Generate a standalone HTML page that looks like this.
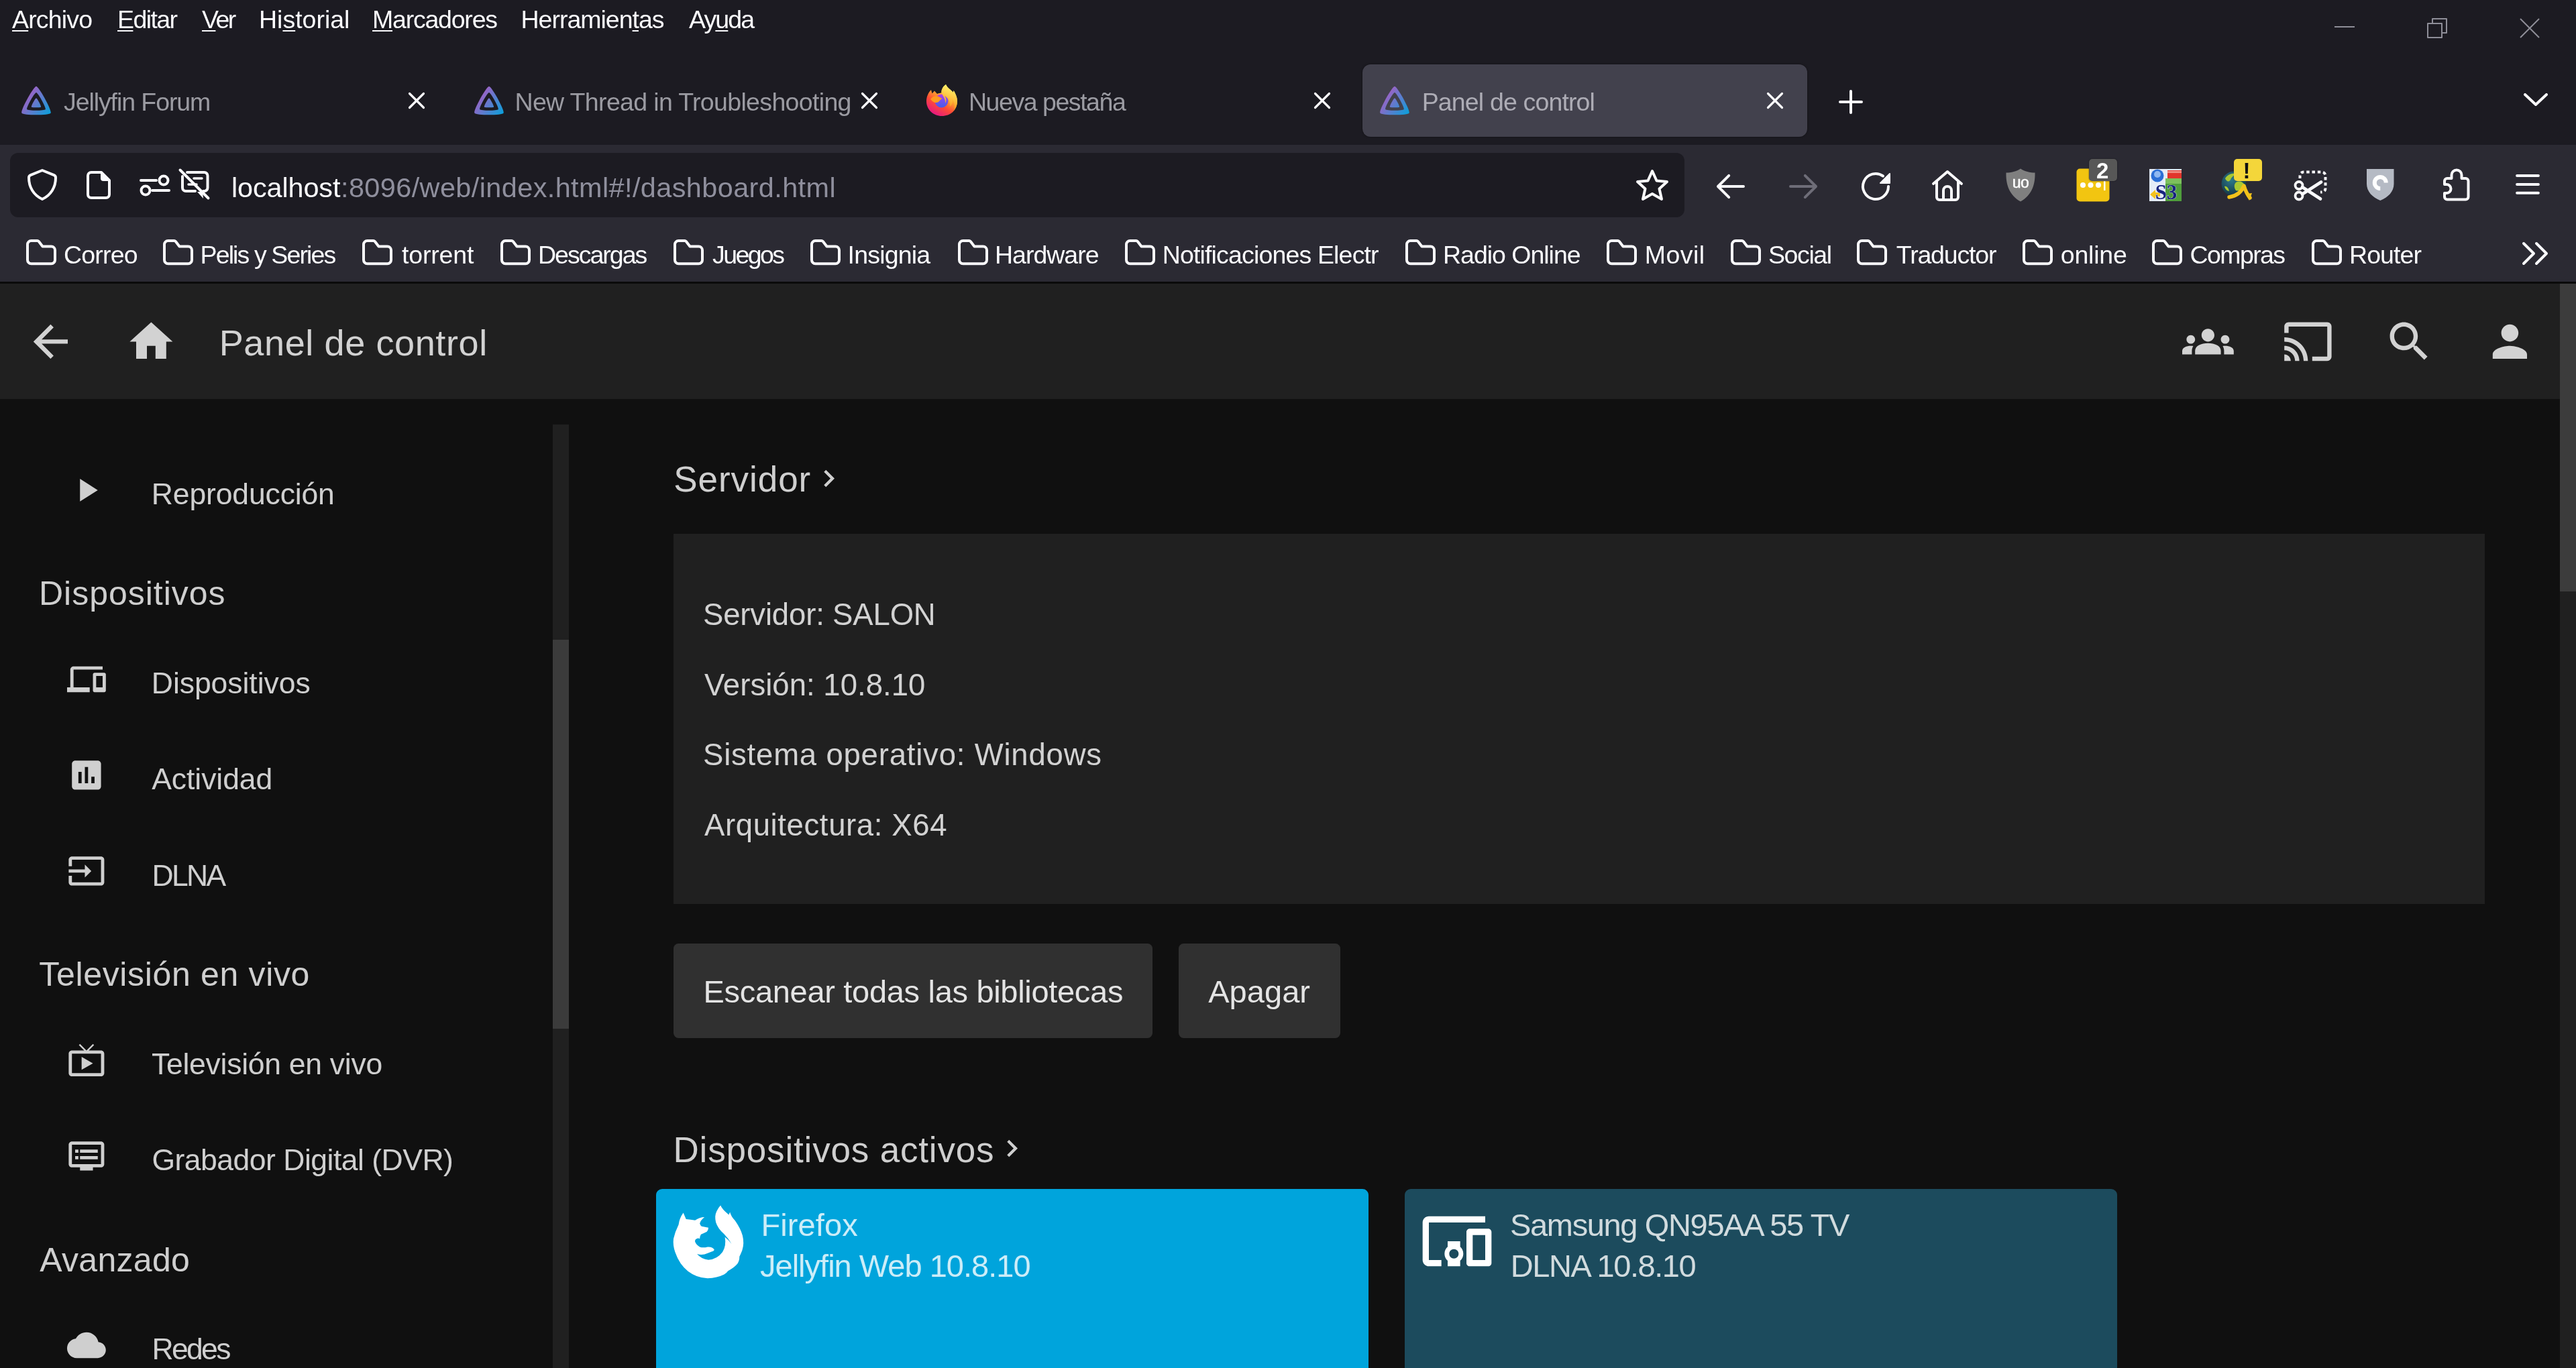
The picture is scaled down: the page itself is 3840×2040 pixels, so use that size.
<!DOCTYPE html>
<html lang="es"><head><meta charset="utf-8"><title>Panel de control</title>
<style>
*{box-sizing:border-box}
html,body{margin:0;padding:0}
body{width:3840px;height:2040px;overflow:hidden;background:#101010;font-family:"Liberation Sans",sans-serif;position:relative}
div,span,svg,h1,h2,h3,a,button,nav,header,main,aside,section,ul,li,p{position:absolute;margin:0;padding:0}
.g{left:0;top:0;width:0;height:0;overflow:visible;will-change:transform}
.t{white-space:pre;font-weight:400;display:block}
.ic{display:block;overflow:visible}
u{text-decoration:underline;text-decoration-thickness:2px;text-underline-offset:3px}
#frame{left:0;top:0;width:3840px;height:216px;background:#1c1b22}
#toolbar{left:0;top:216px;width:3840px;height:204px;background:#2b2a33}
#sep{left:0;top:420px;width:3840px;height:3px;background:#0a0a0a}
#seltab{left:2031px;top:96px;width:663px;height:108px;border-radius:12px;background:#42414d;box-shadow:0 0 3px rgba(0,0,0,.5)}
#urlbar{left:15px;top:228px;width:2496px;height:96px;border-radius:12px;background:#1c1b22}
#app{left:0;top:423px;width:3840px;height:1617px;background:#101010;overflow:hidden}
#hdr{left:0;top:0;width:3816px;height:172px;background:#202020}
#pgscroll{left:3816px;top:0;width:24px;height:1617px;background:#202020}
#pgthumb{left:0;top:0;width:24px;height:459px;background:#3c3c3c}
#drawer{left:0;top:172px;width:823px;height:1445px;background:#101010}
#dscroll{left:824px;top:210px;width:24px;height:1407px;background:#202020}
#dthumb{left:0;top:321px;width:24px;height:580px;background:#3b3b3b}
#panel{left:1003.75px;top:372.75px;width:2699.75px;height:552px;background:#202020}
.btn{background:#303030;border-radius:7.5px;height:140.5px;top:984px}
.card{top:1349.7px;width:1062.3px;height:300px;border-radius:9px 9px 0 0}
</style></head>
<body>
<div id="frame"></div>
<div id="toolbar"></div>
<div id="sep"></div>
<div id="seltab"></div>
<div id="urlbar"></div>
<nav id="menubar" class="g" >
<span class="t " style="left:18.0px;top:11.3px;font-size:37.5px;line-height:37.5px;letter-spacing:-0.83px;color:#fbfbfe;"><u>A</u>rchivo</span>
<span class="t " style="left:175.0px;top:11.3px;font-size:37.5px;line-height:37.5px;letter-spacing:-1.60px;color:#fbfbfe;"><u>E</u>ditar</span>
<span class="t " style="left:301.0px;top:11.3px;font-size:37.5px;line-height:37.5px;letter-spacing:-2.50px;color:#fbfbfe;"><u>V</u>er</span>
<span class="t " style="left:386.0px;top:11.3px;font-size:37.5px;line-height:37.5px;letter-spacing:0.00px;color:#fbfbfe;">Hi<u>s</u>torial</span>
<span class="t " style="left:555.0px;top:11.3px;font-size:37.5px;line-height:37.5px;letter-spacing:-1.22px;color:#fbfbfe;"><u>M</u>arcadores</span>
<span class="t " style="left:776.5px;top:11.3px;font-size:37.5px;line-height:37.5px;letter-spacing:-1.00px;color:#fbfbfe;">Herramien<u>t</u>as</span>
<span class="t " style="left:1027.0px;top:11.3px;font-size:37.5px;line-height:37.5px;letter-spacing:-1.88px;color:#fbfbfe;">Ay<u>u</u>da</span>
</nav>
<div id="titlebar" class="g" >
<svg class="ic" style="left:3480.0px;top:39.0px;width:30px;height:2px" viewBox="0 0 30 2" ><rect width="30" height="2" fill="#8e8e98"/></svg>
<svg class="ic" style="left:3618.0px;top:27.0px;width:30px;height:30px" viewBox="0 0 30 30" ><path d="M1 8H22V29H1Z M8 8V1H29V22H22" stroke="#8e8e98" stroke-width="2" fill="none" stroke-linejoin="round"/></svg>
<svg class="ic" style="left:3756.0px;top:27.0px;width:30px;height:30px" viewBox="0 0 30 30" ><path d="M1 1L29 29M29 1L1 29" stroke="#8e8e98" stroke-width="2" fill="none"/></svg>
</div>
<div id="tabstrip" class="g" >
<svg class="ic" style="left:32.0px;top:128.0px;width:44px;height:44px" viewBox="4.8 2.2 38.4 37.6" ><defs><linearGradient id="jg0" x1="8" y1="14" x2="44" y2="40" gradientUnits="userSpaceOnUse"><stop offset="0" stop-color="#aa5cc3"/><stop offset="1" stop-color="#00a4dc"/></linearGradient></defs><path fill="url(#jg0)" fill-rule="evenodd" d="M24 2.5c-3.4 0-20.6 31.2-18.9 34.6 1.7 3.4 36.1 3.4 37.8 0C44.600 33.700 27.400 2.500 24 2.500zM36 32.300c-1.050 2.100-22.950 2.100-24 0C10.900 30.200 21.900 10.600 24 10.600s13.100 19.600 12 21.700z"/><path fill="url(#jg0)" d="M24 17.800c-1.100 0-6.800 10.300-6.200 11.400.600 1.100 11.800 1.100 12.400 0 .600-1.100-5.100-11.400-6.200-11.400z"/></svg>
<svg class="ic" style="left:609.0px;top:138.0px;width:24px;height:24px" viewBox="0 0 24 24" ><path d="M1.5 1.500L22.500 22.500M22.500 1.500L1.500 22.500" stroke="#fbfbfe" stroke-width="3.200" stroke-linecap="round" fill="none"/></svg>
<svg class="ic" style="left:707.0px;top:128.0px;width:44px;height:44px" viewBox="4.8 2.2 38.4 37.6" ><defs><linearGradient id="jg1" x1="8" y1="14" x2="44" y2="40" gradientUnits="userSpaceOnUse"><stop offset="0" stop-color="#aa5cc3"/><stop offset="1" stop-color="#00a4dc"/></linearGradient></defs><path fill="url(#jg1)" fill-rule="evenodd" d="M24 2.5c-3.4 0-20.6 31.2-18.9 34.6 1.7 3.4 36.1 3.4 37.8 0C44.600 33.700 27.400 2.500 24 2.500zM36 32.300c-1.050 2.100-22.950 2.100-24 0C10.900 30.200 21.900 10.600 24 10.600s13.100 19.600 12 21.700z"/><path fill="url(#jg1)" d="M24 17.800c-1.100 0-6.800 10.300-6.200 11.400.600 1.100 11.800 1.100 12.400 0 .600-1.100-5.100-11.400-6.200-11.400z"/></svg>
<svg class="ic" style="left:1284.0px;top:138.0px;width:24px;height:24px" viewBox="0 0 24 24" ><path d="M1.5 1.500L22.500 22.500M22.500 1.500L1.500 22.500" stroke="#fbfbfe" stroke-width="3.200" stroke-linecap="round" fill="none"/></svg>
<svg class="ic" style="left:1381.0px;top:125.7px;width:46px;height:47px" viewBox="0 0 46 47" ><defs><linearGradient id="fxa" x1="36" y1="4" x2="10" y2="46" gradientUnits="userSpaceOnUse"><stop offset="0" stop-color="#fff36b"/><stop offset=".3" stop-color="#ffb52e"/><stop offset=".62" stop-color="#ff4b35"/><stop offset="1" stop-color="#e3128a"/></linearGradient><linearGradient id="fxb" x1="22" y1="13" x2="22" y2="33" gradientUnits="userSpaceOnUse"><stop offset="0" stop-color="#c339e4"/><stop offset=".5" stop-color="#7a4ef0"/><stop offset="1" stop-color="#4d5be6"/></linearGradient><linearGradient id="fxc" x1="38" y1="2" x2="26" y2="30" gradientUnits="userSpaceOnUse"><stop offset="0" stop-color="#fff76e"/><stop offset="1" stop-color="#ff9c1f"/></linearGradient></defs><path fill="url(#fxa)" d="M29 0C31 5 37 8 40 12L40.500 9C43 13 46 19 46 25C46 38 36 47 23 47C10 47 0 37 0 25C0 18 3 12 7 8L8.500 13.500L12 9.500L16 14C18.500 13 21 12.500 22.500 12.500C22 8 24.500 3 29 0Z"/><circle cx="22.500" cy="24.500" r="10" fill="url(#fxb)"/><path fill="#ff9a20" d="M6 22C9 17 15 16 19 18.500L23.500 21C21 22 20 24 18 26C15 28 11 27 9 25C8 24 7 23 6 22Z"/><path fill="url(#fxc)" d="M29 0C31 5 37 8 40 12L40.500 9C43 13 46 19 46 25C46 30 44 35 41 39C43 33 42 26 38 21C40 26 38 31 35 33C36 27 33 20 27 17C30 21 30 25 28 28C29 22 25 18 22.500 12.500C22 8 24.500 3 29 0Z"/></svg>
<svg class="ic" style="left:1959.0px;top:138.0px;width:24px;height:24px" viewBox="0 0 24 24" ><path d="M1.5 1.500L22.500 22.500M22.500 1.500L1.500 22.500" stroke="#fbfbfe" stroke-width="3.200" stroke-linecap="round" fill="none"/></svg>
<svg class="ic" style="left:2057.0px;top:128.0px;width:44px;height:44px" viewBox="4.8 2.2 38.4 37.6" ><defs><linearGradient id="jg3" x1="8" y1="14" x2="44" y2="40" gradientUnits="userSpaceOnUse"><stop offset="0" stop-color="#aa5cc3"/><stop offset="1" stop-color="#00a4dc"/></linearGradient></defs><path fill="url(#jg3)" fill-rule="evenodd" d="M24 2.5c-3.4 0-20.6 31.2-18.9 34.6 1.7 3.4 36.1 3.4 37.8 0C44.600 33.700 27.400 2.500 24 2.500zM36 32.300c-1.050 2.100-22.950 2.100-24 0C10.900 30.200 21.900 10.600 24 10.600s13.100 19.600 12 21.700z"/><path fill="url(#jg3)" d="M24 17.800c-1.100 0-6.800 10.300-6.200 11.400.600 1.100 11.800 1.100 12.400 0 .600-1.100-5.100-11.400-6.200-11.400z"/></svg>
<svg class="ic" style="left:2634.0px;top:138.0px;width:24px;height:24px" viewBox="0 0 24 24" ><path d="M1.5 1.500L22.500 22.500M22.500 1.500L1.500 22.500" stroke="#fbfbfe" stroke-width="3.200" stroke-linecap="round" fill="none"/></svg>
<svg class="ic" style="left:2741.0px;top:134.0px;width:36px;height:36px" viewBox="0 0 36 36" ><path d="M18 2V34M2 18H34" stroke="#fbfbfe" stroke-width="4" stroke-linecap="round" fill="none"/></svg>
<svg class="ic" style="left:3762.0px;top:139.0px;width:36px;height:20px" viewBox="0 0 36 20" ><path d="M2 2L18 17L34 2" stroke="#fbfbfe" stroke-width="4" stroke-linecap="round" stroke-linejoin="round" fill="none"/></svg>
<span class="t " style="left:95.0px;top:134.3px;font-size:37.5px;line-height:37.5px;letter-spacing:-1.08px;color:#9b9ba2;">Jellyfin Forum</span>
<span class="t " style="left:767.5px;top:134.3px;font-size:37.5px;line-height:37.5px;letter-spacing:-0.66px;color:#9b9ba2;">New Thread in Troubleshooting</span>
<span class="t " style="left:1444.0px;top:134.3px;font-size:37.5px;line-height:37.5px;letter-spacing:-1.46px;color:#9b9ba2;">Nueva pestaña</span>
<span class="t " style="left:2119.7px;top:134.3px;font-size:37.5px;line-height:37.5px;letter-spacing:-0.85px;color:#adacb5;">Panel de control</span>
</div>
<div id="urlbar-content" class="g" >
<svg class="ic" style="left:41.0px;top:252.2px;width:44px;height:47px" viewBox="0 0 44 47" ><path d="M22 2L39.500 9.200Q42 10.200 42 13C42 27 35 39 22 45C9 39 2 27 2 13Q2 10.200 4.500 9.200Z" stroke="#fbfbfe" stroke-width="4" stroke-linejoin="round" fill="none"/></svg>
<svg class="ic" style="left:127.0px;top:253.0px;width:40px;height:46px" viewBox="0 0 40 46" ><path d="M9 4H24L36 16V37a5 5 0 0 1-5 5H9a5 5 0 0 1-5-5V9a5 5 0 0 1 5-5Z" stroke="#fbfbfe" stroke-width="4" stroke-linejoin="round" fill="none"/><path d="M23 3L37 17H27a4 4 0 0 1-4-4Z" fill="#fbfbfe"/></svg>
<svg class="ic" style="left:208.0px;top:258.0px;width:46px;height:36px" viewBox="0 0 46 36" ><path d="M2 11H25M19 26H44" stroke="#fbfbfe" stroke-width="4" stroke-linecap="round"/><circle cx="36" cy="11" r="6.500" stroke="#fbfbfe" stroke-width="4" fill="none"/><circle cx="9" cy="26" r="6.500" stroke="#fbfbfe" stroke-width="4" fill="none"/></svg>
<svg class="ic" style="left:265.0px;top:250.0px;width:50px;height:50px" viewBox="0 0 50 50" ><path d="M14 7H39.500a5 5 0 0 1 5 5V30a5 5 0 0 1-5 5H38M26 35H12a5 5 0 0 1-5-5V13" stroke="#fbfbfe" stroke-width="4" stroke-linejoin="round" stroke-linecap="round" fill="none"/><path d="M24 16H36M16 25H28" stroke="#fbfbfe" stroke-width="3.500" stroke-linecap="round"/><path d="M29 36H37L38 46Z" fill="#fbfbfe"/><path d="M3.500 3.500L45.500 45.500" stroke="#fbfbfe" stroke-width="4" stroke-linecap="round"/></svg>
<svg class="ic" style="left:2438.0px;top:251.0px;width:50px;height:50px" viewBox="0 0 50 50" ><path d="M25 4L31.500 18.500L47 20L35.500 30.500L39 46L25 38L11 46L14.500 30.500L3 20L18.500 18.500Z" stroke="#fbfbfe" stroke-width="4" stroke-linejoin="round" fill="none"/></svg>
<span class="t " style="left:345.0px;top:260.0px;font-size:41.4px;line-height:41.4px;letter-spacing:-0.12px;color:#fbfbfe;">localhost</span>
<span class="t " style="left:508.0px;top:260.0px;font-size:41.4px;line-height:41.4px;letter-spacing:0.42px;color:#8f8f9d;">:8096/web/index.html#!/dashboard.html</span>
</div>
<div id="navbar" class="g" >
<svg class="ic" style="left:2556.8px;top:255.9px;width:48px;height:44px" viewBox="0 0 48 44" ><path d="M42 22H4M20.200 5.800L4 22L20.200 38.200" stroke="#fbfbfe" stroke-width="4" stroke-linecap="round" stroke-linejoin="round" fill="none"/></svg>
<svg class="ic" style="left:2665.0px;top:255.9px;width:48px;height:44px" viewBox="0 0 48 44" ><path d="M4 22H42M25.800 5.800L42 22L25.800 38.200" stroke="#6e6d78" stroke-width="4" stroke-linecap="round" stroke-linejoin="round" fill="none"/></svg>
<svg class="ic" style="left:2772.0px;top:254.0px;width:48px;height:48px" viewBox="0 0 48 48" ><path d="M43 24A19 19 0 1 1 35 8.500" stroke="#fbfbfe" stroke-width="4" stroke-linecap="round" fill="none"/><path d="M45 5V19H31Z" fill="#fbfbfe" stroke="#fbfbfe" stroke-width="2" stroke-linejoin="round"/></svg>
<svg class="ic" style="left:2878.0px;top:252.0px;width:50px;height:50px" viewBox="0 0 50 50" ><path d="M4 22L25 4L46 22M9 19V42a4 4 0 0 0 4 4H37a4 4 0 0 0 4-4V19" stroke="#fbfbfe" stroke-width="4" stroke-linecap="round" stroke-linejoin="round" fill="none"/><path d="M19 46V32a6 6 0 0 1 12 0V46" stroke="#fbfbfe" stroke-width="4" fill="none"/></svg>
<svg class="ic" style="left:2988.0px;top:250.0px;width:48px;height:52px" viewBox="0 0 48 52" ><path d="M24 1.500C30 5.500 38 7.500 45.500 7.500C46 25 41 41 24 50.500C7 41 2 25 2.500 7.500C10 7.500 18 5.500 24 1.500Z" fill="#7f7f7f"/><text x="24" y="30" font-family="Liberation Sans,sans-serif" font-weight="400" font-size="23" text-anchor="middle" fill="#fff" stroke="#fff" stroke-width=".5" letter-spacing="-.5">uo</text></svg>
<svg class="ic" style="left:3095.0px;top:251.0px;width:50px;height:50px" viewBox="0 0 50 50" ><rect x=".5" y=".5" width="49" height="49" rx="5" fill="#f2c511"/><circle cx="10" cy="25" r="4" fill="#fff"/><circle cx="21.500" cy="25" r="4" fill="#fff"/><circle cx="33" cy="25" r="4" fill="#fff"/><rect x="41" y="17" width="2.500" height="16" fill="#fff"/></svg>
<div style="left:3114px;top:237px;width:42px;height:33px;border-radius:5px;background:#575757;box-shadow:0 0 2px rgba(0,0,0,.6)"></div>
<svg class="ic" style="left:3204.0px;top:251.8px;width:48px;height:48px" viewBox="0 0 48 48" ><rect width="48" height="48" fill="#e4ecf8"/><rect x="27" y="2" width="21" height="12" fill="#e2352c"/><rect x="27" y="3" width="21" height="3" fill="#f08a80"/><rect x="24" y="14" width="24" height="34" fill="#4f9d3c"/><rect x="24" y="14" width="24" height="8" fill="#7cc05c"/><circle cx="12" cy="10" r="9.500" fill="#2b6fd6"/><circle cx="12" cy="8" r="5" fill="#8fb8f0"/><path d="M1 38L9 31V35H16V41H9V45Z" fill="#f3c21d"/><text x="25" y="45" font-family="Liberation Serif,serif" font-weight="700" font-size="31" text-anchor="middle" fill="#17237e" stroke="#e8eefc" stroke-width=".7" paint-order="stroke">S3</text></svg>
<svg class="ic" style="left:3311.0px;top:252.0px;width:48px;height:50px" viewBox="0 0 48 50" ><defs><radialGradient id="glb" cx="40%" cy="35%" r="70%"><stop offset="0" stop-color="#2d7a8c"/><stop offset="1" stop-color="#12303f"/></radialGradient></defs><circle cx="19" cy="22" r="18.500" fill="url(#glb)"/><path d="M6 14C10 8 16 6 21 7C19 11 15 12 14 16C12 20 8 19 6 14ZM22 20C27 17 33 19 35 24C33 30 27 34 22 32C19 28 19 23 22 20ZM5 26C8 25 11 28 12 33C9 33 6 30 5 26Z" fill="#a9c832"/><path d="M12 42C24 40 31 33 34 25C36 32 39 38 43 43" stroke="#f2c21b" stroke-width="5.500" fill="none" stroke-linecap="round" stroke-linejoin="round"/><path d="M36 37L46 36L42 47Z" fill="#f2c21b"/></svg>
<div style="left:3329.75px;top:237.25px;width:42.5px;height:32.5px;border-radius:5px;background:#f4d63a"></div>
<svg class="ic" style="left:3416.0px;top:250.0px;width:56px;height:54px" viewBox="0 0 56 54" ><path d="M12.500 16V12a5.500 5.500 0 0 1 5.500-5.500H45a5.500 5.500 0 0 1 5.500 5.500V31a5.500 5.500 0 0 1-5.500 5.500H43" stroke="#fbfbfe" stroke-width="4" stroke-dasharray="4.500 3.800" fill="none"/><circle cx="11" cy="26.500" r="5.500" stroke="#fbfbfe" stroke-width="3.800" fill="none"/><circle cx="11" cy="42" r="5.500" stroke="#fbfbfe" stroke-width="3.800" fill="none"/><path d="M16 29L43 46.500M16 39.500L44 21.500" stroke="#fbfbfe" stroke-width="4.800" stroke-linecap="round"/></svg>
<svg class="ic" style="left:3527.8px;top:251.8px;width:40.5px;height:47px" viewBox="0 0 40.5 47" ><path d="M0 0H40.500V22C40.500 34 32 42 20.250 47C8.500 42 0 34 0 22Z" fill="#b5bac4"/><path d="M20.250 29A8.500 8.500 0 1 1 28.750 20.500" stroke="#fff" stroke-width="6" fill="none"/></svg>
<svg class="ic" style="left:3639.5px;top:250.2px;width:44px;height:52px" viewBox="0 0 44 52" ><path d="M8 16H14.500V11a7.500 7.500 0 0 1 15 0V16H35.500a4 4 0 0 1 4 4V43.500a4 4 0 0 1-4 4H8a4 4 0 0 1-4-4V38H7a6.500 6.500 0 0 0 0-13H4V20a4 4 0 0 1 4-4Z" stroke="#fbfbfe" stroke-width="4" stroke-linejoin="round" fill="none"/></svg>
<svg class="ic" style="left:3748.2px;top:258.2px;width:40px;height:34px" viewBox="0 0 40 34" ><path d="M4 4H36M4 17H36M4 29.750H36" stroke="#fbfbfe" stroke-width="3.800" stroke-linecap="round"/></svg>
<span class="t " style="left:3125.0px;top:237.6px;font-size:33px;line-height:33px;letter-spacing:0.00px;color:#fff;font-weight:700;">2</span>
<span class="t " style="left:3343.5px;top:238.1px;font-size:33px;line-height:33px;letter-spacing:0.00px;color:#111;font-weight:700;">!</span>
</div>
<nav id="bookmarks" class="g" >
<svg class="ic" style="left:39.0px;top:357.2px;width:45px;height:38.25px" viewBox="0 0 45 38.25" ><path d="M2 7.500a5.500 5.500 0 0 1 5.500-5.500H16.500a3 3 0 0 1 2.300 1L24.500 10.500H37.500a5.500 5.500 0 0 1 5.500 5.500V30.750a5.500 5.500 0 0 1-5.500 5.500H7.500a5.500 5.500 0 0 1-5.500-5.500Z" stroke="#fbfbfe" stroke-width="4" stroke-linejoin="round" fill="none"/></svg>
<svg class="ic" style="left:243.0px;top:357.2px;width:45px;height:38.25px" viewBox="0 0 45 38.25" ><path d="M2 7.500a5.500 5.500 0 0 1 5.500-5.500H16.500a3 3 0 0 1 2.300 1L24.500 10.500H37.500a5.500 5.500 0 0 1 5.500 5.500V30.750a5.500 5.500 0 0 1-5.500 5.500H7.500a5.500 5.500 0 0 1-5.500-5.500Z" stroke="#fbfbfe" stroke-width="4" stroke-linejoin="round" fill="none"/></svg>
<svg class="ic" style="left:540.0px;top:357.2px;width:45px;height:38.25px" viewBox="0 0 45 38.25" ><path d="M2 7.500a5.500 5.500 0 0 1 5.500-5.500H16.500a3 3 0 0 1 2.300 1L24.500 10.500H37.500a5.500 5.500 0 0 1 5.500 5.500V30.750a5.500 5.500 0 0 1-5.500 5.500H7.500a5.500 5.500 0 0 1-5.500-5.500Z" stroke="#fbfbfe" stroke-width="4" stroke-linejoin="round" fill="none"/></svg>
<svg class="ic" style="left:746.0px;top:357.2px;width:45px;height:38.25px" viewBox="0 0 45 38.25" ><path d="M2 7.500a5.500 5.500 0 0 1 5.500-5.500H16.500a3 3 0 0 1 2.300 1L24.500 10.500H37.500a5.500 5.500 0 0 1 5.500 5.500V30.750a5.500 5.500 0 0 1-5.500 5.500H7.500a5.500 5.500 0 0 1-5.500-5.500Z" stroke="#fbfbfe" stroke-width="4" stroke-linejoin="round" fill="none"/></svg>
<svg class="ic" style="left:1003.7px;top:357.2px;width:45px;height:38.25px" viewBox="0 0 45 38.25" ><path d="M2 7.500a5.500 5.500 0 0 1 5.500-5.500H16.500a3 3 0 0 1 2.300 1L24.500 10.500H37.500a5.500 5.500 0 0 1 5.500 5.500V30.750a5.500 5.500 0 0 1-5.500 5.500H7.500a5.500 5.500 0 0 1-5.500-5.500Z" stroke="#fbfbfe" stroke-width="4" stroke-linejoin="round" fill="none"/></svg>
<svg class="ic" style="left:1208.0px;top:357.2px;width:45px;height:38.25px" viewBox="0 0 45 38.25" ><path d="M2 7.500a5.500 5.500 0 0 1 5.500-5.500H16.500a3 3 0 0 1 2.300 1L24.500 10.500H37.500a5.500 5.500 0 0 1 5.500 5.500V30.750a5.500 5.500 0 0 1-5.500 5.500H7.500a5.500 5.500 0 0 1-5.500-5.500Z" stroke="#fbfbfe" stroke-width="4" stroke-linejoin="round" fill="none"/></svg>
<svg class="ic" style="left:1428.0px;top:357.2px;width:45px;height:38.25px" viewBox="0 0 45 38.25" ><path d="M2 7.500a5.500 5.500 0 0 1 5.500-5.500H16.500a3 3 0 0 1 2.300 1L24.500 10.500H37.500a5.500 5.500 0 0 1 5.500 5.500V30.750a5.500 5.500 0 0 1-5.500 5.500H7.500a5.500 5.500 0 0 1-5.500-5.500Z" stroke="#fbfbfe" stroke-width="4" stroke-linejoin="round" fill="none"/></svg>
<svg class="ic" style="left:1676.5px;top:357.2px;width:45px;height:38.25px" viewBox="0 0 45 38.25" ><path d="M2 7.500a5.500 5.500 0 0 1 5.500-5.500H16.500a3 3 0 0 1 2.300 1L24.500 10.500H37.500a5.500 5.500 0 0 1 5.500 5.500V30.750a5.500 5.500 0 0 1-5.500 5.500H7.500a5.500 5.500 0 0 1-5.500-5.500Z" stroke="#fbfbfe" stroke-width="4" stroke-linejoin="round" fill="none"/></svg>
<svg class="ic" style="left:2095.0px;top:357.2px;width:45px;height:38.25px" viewBox="0 0 45 38.25" ><path d="M2 7.500a5.500 5.500 0 0 1 5.500-5.500H16.500a3 3 0 0 1 2.300 1L24.500 10.500H37.500a5.500 5.500 0 0 1 5.500 5.500V30.750a5.500 5.500 0 0 1-5.500 5.500H7.500a5.500 5.500 0 0 1-5.500-5.500Z" stroke="#fbfbfe" stroke-width="4" stroke-linejoin="round" fill="none"/></svg>
<svg class="ic" style="left:2394.5px;top:357.2px;width:45px;height:38.25px" viewBox="0 0 45 38.25" ><path d="M2 7.500a5.500 5.500 0 0 1 5.500-5.500H16.500a3 3 0 0 1 2.300 1L24.500 10.500H37.500a5.500 5.500 0 0 1 5.500 5.500V30.750a5.500 5.500 0 0 1-5.500 5.500H7.500a5.500 5.500 0 0 1-5.500-5.500Z" stroke="#fbfbfe" stroke-width="4" stroke-linejoin="round" fill="none"/></svg>
<svg class="ic" style="left:2580.0px;top:357.2px;width:45px;height:38.25px" viewBox="0 0 45 38.25" ><path d="M2 7.500a5.500 5.500 0 0 1 5.500-5.500H16.500a3 3 0 0 1 2.300 1L24.500 10.500H37.500a5.500 5.500 0 0 1 5.500 5.500V30.750a5.500 5.500 0 0 1-5.500 5.500H7.500a5.500 5.500 0 0 1-5.500-5.500Z" stroke="#fbfbfe" stroke-width="4" stroke-linejoin="round" fill="none"/></svg>
<svg class="ic" style="left:2767.7px;top:357.2px;width:45px;height:38.25px" viewBox="0 0 45 38.25" ><path d="M2 7.500a5.500 5.500 0 0 1 5.500-5.500H16.500a3 3 0 0 1 2.300 1L24.500 10.500H37.500a5.500 5.500 0 0 1 5.500 5.500V30.750a5.500 5.500 0 0 1-5.500 5.500H7.500a5.500 5.500 0 0 1-5.500-5.500Z" stroke="#fbfbfe" stroke-width="4" stroke-linejoin="round" fill="none"/></svg>
<svg class="ic" style="left:3014.7px;top:357.2px;width:45px;height:38.25px" viewBox="0 0 45 38.25" ><path d="M2 7.500a5.500 5.500 0 0 1 5.500-5.500H16.500a3 3 0 0 1 2.300 1L24.500 10.500H37.500a5.500 5.500 0 0 1 5.500 5.500V30.750a5.500 5.500 0 0 1-5.500 5.500H7.500a5.500 5.500 0 0 1-5.500-5.500Z" stroke="#fbfbfe" stroke-width="4" stroke-linejoin="round" fill="none"/></svg>
<svg class="ic" style="left:3208.4px;top:357.2px;width:45px;height:38.25px" viewBox="0 0 45 38.25" ><path d="M2 7.500a5.500 5.500 0 0 1 5.500-5.500H16.500a3 3 0 0 1 2.300 1L24.500 10.500H37.500a5.500 5.500 0 0 1 5.500 5.500V30.750a5.500 5.500 0 0 1-5.500 5.500H7.500a5.500 5.500 0 0 1-5.500-5.500Z" stroke="#fbfbfe" stroke-width="4" stroke-linejoin="round" fill="none"/></svg>
<svg class="ic" style="left:3446.0px;top:357.2px;width:45px;height:38.25px" viewBox="0 0 45 38.25" ><path d="M2 7.500a5.500 5.500 0 0 1 5.500-5.500H16.500a3 3 0 0 1 2.300 1L24.500 10.500H37.500a5.500 5.500 0 0 1 5.500 5.500V30.750a5.500 5.500 0 0 1-5.500 5.500H7.500a5.500 5.500 0 0 1-5.500-5.500Z" stroke="#fbfbfe" stroke-width="4" stroke-linejoin="round" fill="none"/></svg>
<svg class="ic" style="left:3759.0px;top:359.5px;width:40px;height:36px" viewBox="0 0 40 36" ><path d="M3 3L18 18L3 33M22 3L37 18L22 33" stroke="#fbfbfe" stroke-width="4" stroke-linecap="round" stroke-linejoin="round" fill="none"/></svg>
<span class="t " style="left:95.0px;top:361.8px;font-size:37.5px;line-height:37.5px;letter-spacing:-0.80px;color:#fbfbfe;">Correo</span>
<span class="t " style="left:298.6px;top:361.8px;font-size:37.5px;line-height:37.5px;letter-spacing:-1.89px;color:#fbfbfe;">Pelis y Series</span>
<span class="t " style="left:599.0px;top:361.8px;font-size:37.5px;line-height:37.5px;letter-spacing:-0.17px;color:#fbfbfe;">torrent</span>
<span class="t " style="left:802.0px;top:361.8px;font-size:37.5px;line-height:37.5px;letter-spacing:-2.00px;color:#fbfbfe;">Descargas</span>
<span class="t " style="left:1062.0px;top:361.8px;font-size:37.5px;line-height:37.5px;letter-spacing:-2.60px;color:#fbfbfe;">Juegos</span>
<span class="t " style="left:1263.5px;top:361.8px;font-size:37.5px;line-height:37.5px;letter-spacing:-0.79px;color:#fbfbfe;">Insignia</span>
<span class="t " style="left:1483.0px;top:361.8px;font-size:37.5px;line-height:37.5px;letter-spacing:-1.00px;color:#fbfbfe;">Hardware</span>
<span class="t " style="left:1732.7px;top:361.8px;font-size:37.5px;line-height:37.5px;letter-spacing:-0.84px;color:#fbfbfe;">Notificaciones Electr</span>
<span class="t " style="left:2151.0px;top:361.8px;font-size:37.5px;line-height:37.5px;letter-spacing:-1.02px;color:#fbfbfe;">Radio Online</span>
<span class="t " style="left:2451.7px;top:361.8px;font-size:37.5px;line-height:37.5px;letter-spacing:0.48px;color:#fbfbfe;">Movil</span>
<span class="t " style="left:2636.0px;top:361.8px;font-size:37.5px;line-height:37.5px;letter-spacing:-1.40px;color:#fbfbfe;">Social</span>
<span class="t " style="left:2826.8px;top:361.8px;font-size:37.5px;line-height:37.5px;letter-spacing:-1.18px;color:#fbfbfe;">Traductor</span>
<span class="t " style="left:3071.8px;top:361.8px;font-size:37.5px;line-height:37.5px;letter-spacing:-0.22px;color:#fbfbfe;">online</span>
<span class="t " style="left:3264.6px;top:361.8px;font-size:37.5px;line-height:37.5px;letter-spacing:-1.60px;color:#fbfbfe;">Compras</span>
<span class="t " style="left:3502.0px;top:361.8px;font-size:37.5px;line-height:37.5px;letter-spacing:-0.92px;color:#fbfbfe;">Router</span>
</nav>
<div id="app">
  <div id="hdr"></div>
  <div id="drawer"></div>
  <div id="dscroll"><div id="dthumb"></div></div>
  <div id="panel"></div>
  <div class="btn" style="left:1003.75px;width:714.25px"></div>
  <div class="btn" style="left:1757px;width:241px"></div>
  <div class="card" style="left:978px;background:#00a4dc"></div>
  <div class="card" style="left:2093.8px;background:#1c4b5d"></div>
  <div id="pgscroll"><div id="pgthumb"></div></div>
</div>
<header id="jfheader" class="g" >
<svg class="ic" style="left:37.2px;top:471.1px;width:76.8px;height:76.8px" viewBox="0 0 24 24" ><path fill="rgba(255,255,255,.8)" d="M20 11H7.83l5.59-5.59L12 4l-8 8 8 8 1.41-1.41L7.83 13H20v-2z"/></svg>
<svg class="ic" style="left:187.1px;top:471.1px;width:76.8px;height:76.8px" viewBox="0 0 24 24" ><path fill="rgba(255,255,255,.8)" d="M10 20v-6h4v6h5v-8h3L12 3 2 12h3v8z"/></svg>
<svg class="ic" style="left:3252.6px;top:471.1px;width:76.8px;height:76.8px" viewBox="0 0 24 24" ><path fill="rgba(255,255,255,.8)" d="M12 12.75c1.63 0 3.07.39 4.24.9 1.08.48 1.76 1.56 1.76 2.73V18H6v-1.61c0-1.18.68-2.26 1.76-2.73 1.17-.52 2.61-.91 4.24-.91zM4 13c1.1 0 2-.9 2-2s-.9-2-2-2-2 .9-2 2 .9 2 2 2zm1.13 1.1c-.37-.06-.74-.1-1.13-.1-.99 0-1.93.21-2.78.58C.48 14.9 0 15.62 0 16.43V18h4.5v-1.61c0-.83.23-1.61.63-2.29zM20 13c1.1 0 2-.9 2-2s-.9-2-2-2-2 .9-2 2 .9 2 2 2zm4 3.43c0-.81-.48-1.53-1.22-1.85-.85-.37-1.79-.58-2.78-.58-.39 0-.76.04-1.13.1.4.68.63 1.46.63 2.29V18H24v-1.57zM12 6c1.66 0 3 1.34 3 3s-1.34 3-3 3-3-1.34-3-3 1.34-3 3-3z"/></svg>
<svg class="ic" style="left:3402.1px;top:471.1px;width:76.8px;height:76.8px" viewBox="0 0 24 24" ><path fill="rgba(255,255,255,.8)" d="M21 3H3c-1.1 0-2 .9-2 2v3h2V5h18v14h-7v2h7c1.1 0 2-.9 2-2V5c0-1.1-.9-2-2-2zM1 18v3h3c0-1.66-1.34-3-3-3zm0-4v2c2.76 0 5 2.24 5 5h2c0-3.87-3.13-7-7-7zm0-4v2c4.97 0 9 4.03 9 9h2c0-6.08-4.93-11-11-11z"/></svg>
<svg class="ic" style="left:3553.1px;top:471.1px;width:76.8px;height:76.8px" viewBox="0 0 24 24" ><path fill="rgba(255,255,255,.8)" d="M15.5 14h-.79l-.28-.27C15.41 12.59 16 11.11 16 9.5 16 5.91 13.09 3 9.5 3S3 5.91 3 9.5 5.91 16 9.5 16c1.61 0 3.09-.59 4.23-1.57l.27.28v.79l5 4.99L20.49 19l-4.99-5zm-6 0C7.01 14 5 11.99 5 9.5S7.01 5 9.5 5 14 7.01 14 9.5 11.99 14 9.5 14z"/></svg>
<svg class="ic" style="left:3702.6px;top:471.1px;width:76.8px;height:76.8px" viewBox="0 0 24 24" ><path fill="rgba(255,255,255,.8)" d="M12 12c2.21 0 4-1.79 4-4s-1.79-4-4-4-4 1.79-4 4 1.79 4 4 4zm0 2c-2.67 0-8 1.34-8 4v2h16v-2c0-2.66-5.33-4-8-4z"/></svg>
<h3 class="t " style="left:326.7px;top:484.3px;font-size:54px;line-height:54px;letter-spacing:0.62px;color:rgba(255,255,255,.8);">Panel de control</h3>
</header>
<aside id="jfdrawer" class="g" >
<svg class="ic" style="left:100.2px;top:701.6px;width:57.8px;height:57.8px" viewBox="0 0 24 24" ><path fill="rgba(255,255,255,.8)" d="M8 5v14l11-7z"/></svg>
<svg class="ic" style="left:100.2px;top:983.6px;width:57.8px;height:57.8px" viewBox="0 0 24 24" ><path fill="rgba(255,255,255,.8)" d="M4 6h18V4H4c-1.1 0-2 .9-2 2v11H0v3h14v-3H4V6zm19 2h-6c-.55 0-1 .45-1 1v10c0 .55.45 1 1 1h6c.55 0 1-.45 1-1V9c0-.55-.45-1-1-1zm-1 9h-4v-7h4v7z"/></svg>
<svg class="ic" style="left:100.2px;top:1127.1px;width:57.8px;height:57.8px" viewBox="0 0 24 24" ><path fill="rgba(255,255,255,.8)" d="M19 3H5c-1.1 0-2 .9-2 2v14c0 1.1.9 2 2 2h14c1.1 0 2-.9 2-2V5c0-1.1-.9-2-2-2zM9 17H7v-7h2v7zm4 0h-2V7h2v10zm4 0h-2v-4h2v4z"/></svg>
<svg class="ic" style="left:100.2px;top:1270.4px;width:57.8px;height:57.8px" viewBox="0 0 24 24" ><path fill="rgba(255,255,255,.8)" d="M21 3.01H3c-1.1 0-2 .9-2 2V9h2V4.99h18v14.03H3V15H1v4.01c0 1.1.9 1.98 2 1.98h18c1.1 0 2-.88 2-1.98v-14c0-1.11-.9-2-2-2zM11 16l4-4-4-4v3H1v2h10v3z"/></svg>
<svg class="ic" style="left:100.2px;top:1552.1px;width:57.8px;height:57.8px" viewBox="0 0 24 24" ><path fill="rgba(255,255,255,.8)" d="M21 6h-7.59l3.29-3.29L16 2l-4 4-4-4-.71.71L10.59 6H3c-1.1 0-2 .89-2 2v12c0 1.1.9 2 2 2h18c1.1 0 2-.9 2-2V8c0-1.11-.9-2-2-2zm0 14H3V8h18v12zM9 10v8l7-4z"/></svg>
<svg class="ic" style="left:100.2px;top:1695.1px;width:57.8px;height:57.8px" viewBox="0 0 24 24" ><path fill="rgba(255,255,255,.8)" d="M21 3H3c-1.1 0-2 .9-2 2v12c0 1.1.9 2 2 2h5v2h8v-2h5c1.1 0 1.99-.9 1.99-2L23 5c0-1.1-.9-2-2-2zm0 14H3V5h18v12zm-2-9H8v2h11V8zm0 4H8v2h11v-2zM7 8H5v2h2V8zm0 4H5v2h2v-2z"/></svg>
<svg class="ic" style="left:100.2px;top:1976.8px;width:57.8px;height:57.8px" viewBox="0 0 24 24" ><path fill="rgba(255,255,255,.8)" d="M19.35 10.04C18.67 6.59 15.64 4 12 4 9.11 4 6.6 5.64 5.35 8.04 2.34 8.36 0 10.91 0 14c0 3.31 2.69 6 6 6h13c2.76 0 5-2.24 5-5 0-2.64-2.05-4.78-4.65-4.96z"/></svg>
<span class="t " style="left:225.8px;top:714.8px;font-size:44.5px;line-height:44.5px;letter-spacing:-0.14px;color:rgba(255,255,255,.8);">Reproducción</span>
<h3 class="t " style="left:58.0px;top:860.2px;font-size:50px;line-height:50px;letter-spacing:0.98px;color:rgba(255,255,255,.8);">Dispositivos</h3>
<span class="t " style="left:225.8px;top:996.8px;font-size:44.5px;line-height:44.5px;letter-spacing:-0.05px;color:rgba(255,255,255,.8);">Dispositivos</span>
<span class="t " style="left:226.2px;top:1140.3px;font-size:44.5px;line-height:44.5px;letter-spacing:-0.06px;color:rgba(255,255,255,.8);">Actividad</span>
<span class="t " style="left:226.5px;top:1283.6px;font-size:44.5px;line-height:44.5px;letter-spacing:-2.67px;color:rgba(255,255,255,.8);">DLNA</span>
<h3 class="t " style="left:58.3px;top:1428.0px;font-size:50px;line-height:50px;letter-spacing:0.66px;color:rgba(255,255,255,.8);">Televisión en vivo</h3>
<span class="t " style="left:226.0px;top:1565.3px;font-size:44.5px;line-height:44.5px;letter-spacing:-0.27px;color:rgba(255,255,255,.8);">Televisión en vivo</span>
<span class="t " style="left:226.4px;top:1708.3px;font-size:44.5px;line-height:44.5px;letter-spacing:-0.50px;color:rgba(255,255,255,.8);">Grabador Digital (DVR)</span>
<h3 class="t " style="left:59.3px;top:1853.7px;font-size:50px;line-height:50px;letter-spacing:0.29px;color:rgba(255,255,255,.8);">Avanzado</h3>
<span class="t " style="left:226.5px;top:1990.0px;font-size:44.5px;line-height:44.5px;letter-spacing:-2.67px;color:rgba(255,255,255,.8);">Redes</span>
</aside>
<main id="jfmain" class="g" >
<svg class="ic" style="left:1209.9px;top:688.0px;width:51px;height:51px" viewBox="0 0 24 24" ><path fill="rgba(255,255,255,.8)" d="M10 6L8.59 7.41 13.17 12l-4.58 4.59L10 18l6-6z"/></svg>
<svg class="ic" style="left:1483.0px;top:1687.0px;width:51px;height:51px" viewBox="0 0 24 24" ><path fill="rgba(255,255,255,.8)" d="M10 6L8.59 7.41 13.17 12l-4.58 4.59L10 18l6-6z"/></svg>
<svg class="ic" style="left:2116.4px;top:1795.1px;width:112px;height:112px" viewBox="0 0 24 24" ><path fill="#fff" d="M3 6h18V4H3c-1.1 0-2 .9-2 2v12c0 1.1.9 2 2 2h4v-2H3V6zm10 6H9v1.78c-.61.55-1 1.33-1 2.22s.39 1.67 1 2.22V20h4v-1.78c.61-.55 1-1.34 1-2.22s-.39-1.67-1-2.22V12zm-2 5.5c-.83 0-1.5-.67-1.5-1.5s.67-1.5 1.5-1.5 1.5.67 1.5 1.5-.67 1.5-1.5 1.5zM22 8h-6c-.5 0-1 .5-1 1v10c0 .5.5 1 1 1h6c.5 0 1-.5 1-1V9c0-.5-.5-1-1-1zm-1 10h-4v-8h4v8z"/></svg>
<svg class="ic" style="left:980.0px;top:1770.0px;width:160px;height:160px" viewBox="0 0 1368 1368" ><path fill="#fff" d="M330 330L365 410Q420 415 480 425Q540 385 600 385Q550 425 540 465Q550 500 575 505L650 520Q650 550 630 570Q590 590 555 605Q540 630 540 660Q520 650 500 660Q475 670 480 700Q495 740 540 765Q580 780 640 765Q700 760 725 800Q720 820 690 825Q650 840 600 860Q550 870 505 855Q560 920 650 930Q760 925 830 830Q880 750 860 640Q900 670 945 725Q900 650 850 600Q770 530 745 450Q725 370 755 310Q775 265 805 235Q820 280 910 355L925 320Q935 370 990 430Q1060 530 1085 620Q1110 720 1080 810Q1060 860 1045 890Q1050 930 1020 980Q980 1030 900 1070Q880 1100 850 1115Q760 1160 640 1165Q500 1160 390 1075Q280 990 225 830Q195 740 205 660Q225 570 270 480Q280 400 330 330Z"/></svg>
<h2 class="t " style="left:1004.2px;top:688.1px;font-size:53px;line-height:53px;letter-spacing:0.96px;color:rgba(255,255,255,.8);">Servidor</h2>
<p class="t " style="left:1048.0px;top:894.0px;font-size:45.5px;line-height:45.5px;letter-spacing:-0.16px;color:rgba(255,255,255,.8);">Servidor: SALON</p>
<p class="t " style="left:1050.0px;top:999.0px;font-size:45.5px;line-height:45.5px;letter-spacing:0.03px;color:rgba(255,255,255,.8);">Versión: 10.8.10</p>
<p class="t " style="left:1048.0px;top:1103.0px;font-size:45.5px;line-height:45.5px;letter-spacing:0.80px;color:rgba(255,255,255,.8);">Sistema operativo: Windows</p>
<p class="t " style="left:1050.0px;top:1208.0px;font-size:45.5px;line-height:45.5px;letter-spacing:0.62px;color:rgba(255,255,255,.8);">Arquitectura: X64</p>
<span class="t " style="left:1048.5px;top:1455.2px;font-size:47px;line-height:47px;letter-spacing:-0.31px;color:rgba(255,255,255,.87);">Escanear todas las bibliotecas</span>
<span class="t " style="left:1801.2px;top:1455.2px;font-size:47px;line-height:47px;letter-spacing:0.05px;color:rgba(255,255,255,.87);">Apagar</span>
<h2 class="t " style="left:1003.5px;top:1687.6px;font-size:53px;line-height:53px;letter-spacing:0.82px;color:rgba(255,255,255,.8);">Dispositivos activos</h2>
<span class="t " style="left:1134.4px;top:1802.9px;font-size:47px;line-height:47px;letter-spacing:0.12px;color:rgba(255,255,255,.8);">Firefox</span>
<span class="t " style="left:1133.0px;top:1863.7px;font-size:47px;line-height:47px;letter-spacing:-0.99px;color:rgba(255,255,255,.8);">Jellyfin Web 10.8.10</span>
<span class="t " style="left:2251.1px;top:1802.8px;font-size:47px;line-height:47px;letter-spacing:-1.36px;color:rgba(255,255,255,.8);">Samsung QN95AA 55 TV</span>
<span class="t " style="left:2251.8px;top:1863.7px;font-size:47px;line-height:47px;letter-spacing:-1.43px;color:rgba(255,255,255,.8);">DLNA 10.8.10</span>
</main>
</body></html>
